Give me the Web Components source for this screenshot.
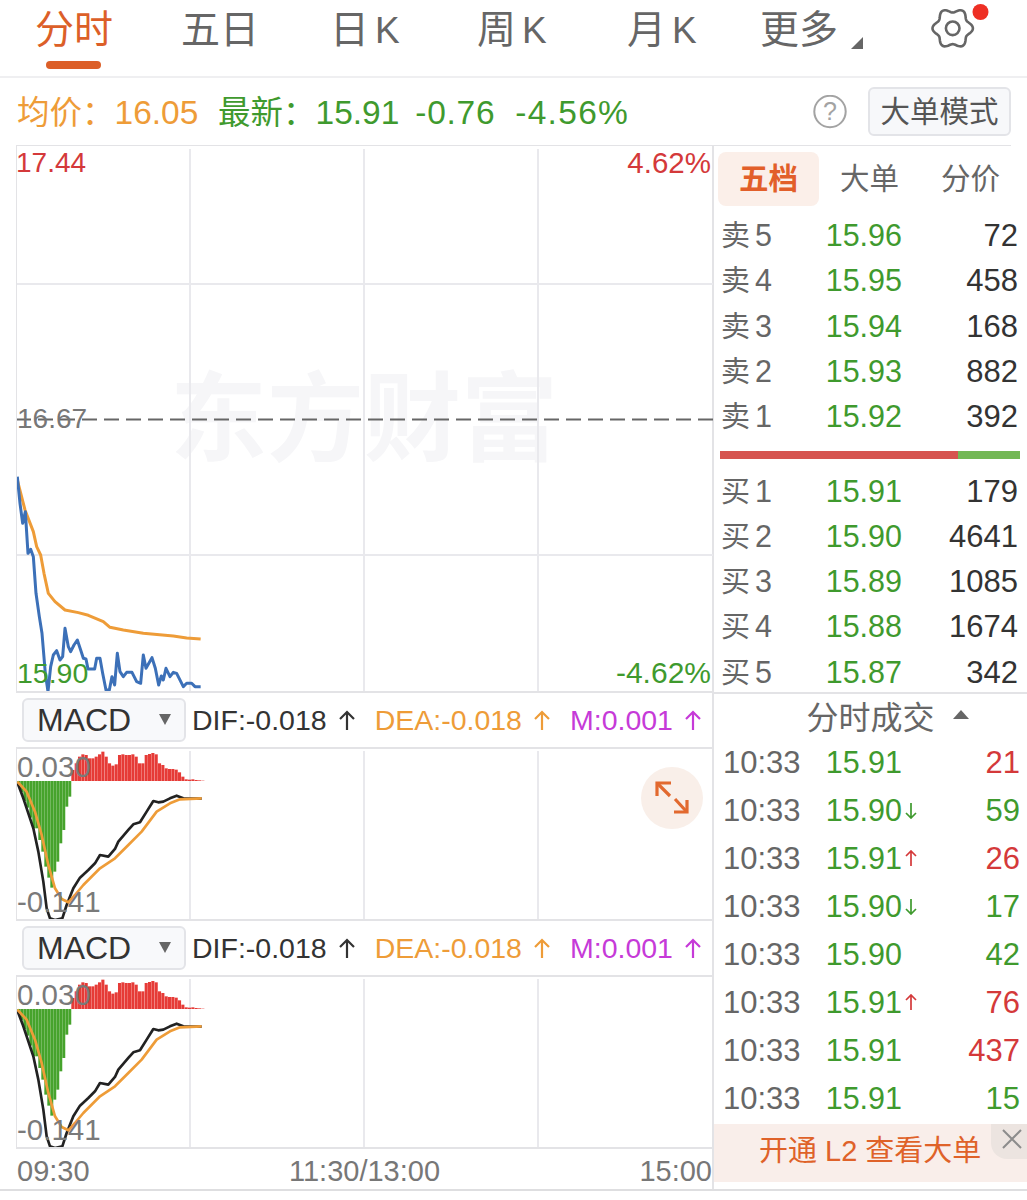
<!DOCTYPE html>
<html lang="zh">
<head>
<meta charset="utf-8">
<title>分时</title>
<style>
	html, body { margin: 0; background: #ffffff; }
	body { font-family: "Liberation Sans", "Noto Sans CJK SC", sans-serif; }
</style>
</head>
<body>
<quote-app></quote-app>
<script>
const GREEN = '#3f9a2e', RED = '#d4393a', ORANGE = '#ee9c38', BRAND = '#dc5f28';

// wavy six-bump outline for the settings icon
function gearPath(cx, cy) {
	const pts = [];
	for (let i = 0; i < 120; i++) {
		const a = i / 120 * Math.PI * 2;
		const r = 18 + 2.2 * Math.cos(6 * a);
		pts.push((cx + r * Math.cos(a)).toFixed(2) + ' ' + (cy + r * Math.sin(a)).toFixed(2));
	}
	return 'M' + pts.join(' L') + ' Z';
}

function arrowUp(size) {
	return `<svg class="arr" width="${size}" height="${size + 3}" viewBox="0 0 18 21" style="display:inline-block;vertical-align:-2px"><path d="M9 20 V2 M2 9 L9 2 L16 9" fill="none" stroke="currentColor" stroke-width="2.200"/></svg>`;
}

class QuoteTabs extends HTMLElement {
	connectedCallback() {
		this.attachShadow({ mode: 'open' }).innerHTML = `<style>
			:host { display: flex; height: 76px; border-bottom: 2px solid #efeff1; font-size: 39px; color: #666666; position: relative; box-sizing: content-box; }
			.tab { width: 78px; flex: none; line-height: 60px; position: relative; white-space: nowrap; }
			.tab.on { color: ${BRAND}; }
			.tab.on::after { content: ''; position: absolute; left: 11px; top: 61px; width: 55px; height: 8px; border-radius: 4px; background: ${BRAND}; }
			.k { font-size: 37px; margin-left: 6px; }
			.more::after { content: ''; position: absolute; right: -25px; top: 37px; border-style: solid; border-width: 0 0 12px 12px; border-color: transparent transparent #666666 transparent; }
			.gear { position: absolute; left: 925px; top: 0; width: 66px; height: 54px; }
		</style>
		<div class="tab on" style="margin-left:35px">分时</div>
		<div class="tab" style="margin-left:68px">五日</div>
		<div class="tab" style="margin-left:71px">日<span class="k">K</span></div>
		<div class="tab" style="margin-left:69px">周<span class="k">K</span></div>
		<div class="tab" style="margin-left:72px">月<span class="k">K</span></div>
		<div class="tab more" style="margin-left:55px">更多</div>
		<svg class="gear" viewBox="925 0 66 54"><path d="${gearPath(952.7, 28.3)}" fill="none" stroke="#666666" stroke-width="2.600"/><circle cx="952.700" cy="28.300" r="6.800" fill="none" stroke="#666666" stroke-width="2.600"/><circle cx="980.500" cy="12" r="8" fill="#ee2f24"/></svg>`;
	}
}

class QuoteInfo extends HTMLElement {
	connectedCallback() {
		this.attachShadow({ mode: 'open' }).innerHTML = `<style>
			:host { display: flex; align-items: center; height: 67px; padding-left: 17px; font-size: 33.500px; white-space: nowrap; }
			.cjk { font-size: 32.500px; }
			.avg { color: ${ORANGE}; width: 201px; flex: none; margin-bottom: 4px; }
			.last { color: ${GREEN}; display: flex; align-items: baseline; margin-bottom: 4px; }
			.help { margin-left: auto; width: 34px; height: 34px; flex: none; }
			.btn { margin: 0 16px 0 21px; width: 143px; height: 49px; box-sizing: border-box; border: 2px solid #e3e4e8; border-radius: 6px; background: #f7f8fa; color: #555555; font-size: 29.500px; line-height: 46px; text-align: center; flex: none; }
		</style>
		<div class="avg"><span class="cjk">均价：</span>16.05</div>
		<div class="last"><span><span class="cjk">最新：</span>15.91</span><span style="margin-left:16px;letter-spacing:.7px">-0.76</span><span style="margin-left:20px;letter-spacing:1.300px">-4.56%</span></div>
		<svg class="help" viewBox="0 0 34 34"><circle cx="17" cy="16.500" r="15.700" fill="none" stroke="#a3a3a3" stroke-width="2"/><text x="17" y="25" font-size="25" text-anchor="middle" fill="#a3a3a3" font-family="Liberation Sans">?</text></svg>
		<div class="btn">大单模式</div>`;
	}
}

// line data is read off the reference at 3x, scaled down in the svg transform
function points(list) { return list.map(p => p.join(',')).join(' '); }

const BLUE_LINE = [[52,50],[60,130],[68,190],[76,155],[84,280],[92,268],[100,290],[108,400],[118,470],[126,520],[136,640],[144,695],[152,620],[160,585],[170,572],[180,600],[188,590],[195,505],[205,560],[212,575],[222,555],[232,540],[242,570],[250,595],[258,597],[264,627],[284,627],[290,595],[300,595],[308,640],[318,690],[328,690],[336,650],[344,675],[352,580],[360,635],[370,650],[380,637],[396,637],[410,665],[422,670],[430,585],[438,625],[456,593],[466,625],[476,675],[484,648],[490,660],[498,625],[510,650],[520,637],[530,640],[550,680],[560,670],[575,670],[585,680],[602,680]];
const AVG_LINE = [[52,60],[75,150],[100,215],[110,260],[122,285],[132,340],[145,400],[165,425],[195,450],[235,458],[265,466],[310,485],[330,502],[370,510],[430,520],[520,528],[560,534],[602,537]];

class PriceChart extends HTMLElement {
	connectedCallback() {
		this.attachShadow({ mode: 'open' }).innerHTML = `<style>
			:host { display: block; position: relative; height: 548px; margin-left: 16px; box-sizing: border-box; border: solid #e3e3e6; border-width: 1px 0 2px 1px; overflow: hidden; font-size: 28px; }
			svg { position: absolute; left: -1px; top: -1px; }
			.mark { position: absolute; left: 153px; top: 216px; font-size: 97px; font-weight: 700; color: #f6f6f8; white-space: nowrap; line-height: 1.2; }
			.l { position: absolute; line-height: 32px; white-space: nowrap; }
		</style>
		<div class="mark">东方财富</div>
		<svg width="697" height="548">
			<g stroke="#e9e9ed" stroke-width="2">
				<line x1="174" x2="174" y1="4" y2="548"/><line x1="348" x2="348" y1="4" y2="548"/><line x1="522" x2="522" y1="4" y2="548"/>
				<line x1="0" x2="697" y1="139" y2="139"/><line x1="0" x2="697" y1="410" y2="410"/>
			</g>
			<line x1="0" x2="697" y1="274.500" y2="274.500" stroke="#666666" stroke-width="2" stroke-dasharray="15 7"/>
			<g fill="none" stroke-linejoin="round" transform="translate(-16,315) scale(.3333)">
				<polyline stroke-width="9" stroke="#ee9c38" points="${points(AVG_LINE)}"/>
				<polyline stroke-width="9" stroke="#3c70b8" points="${points(BLUE_LINE)}"/>
			</g>
		</svg>
		<div class="l" style="left:-1px;top:1px;color:${RED}">17.44</div>
		<div class="l" style="right:2px;top:1px;color:${RED};font-size:29.500px">4.62%</div>
		<div class="l" style="left:0;top:257px;color:#777777">16.67</div>
		<div class="l" style="left:0;top:511px;color:${GREEN};font-size:28.500px">15.90</div>
		<div class="l" style="right:2px;top:511px;color:${GREEN};font-size:30px">-4.62%</div>`;
	}
}

const RED_BARS = [225,205,185,178,180,190,190,185,178,170,185,205,212,208,180,178,180,180,178,185,205,205,180,177,174,178,205,210,220,222,222,224,232,245,253,254,253,255,256,257];
const GREEN_BARS = [[52,268],[61,292],[70,318],[79,338],[88,368],[97,400],[106,400],[115,435],[124,470],[133,515],[142,548],[151,578],[160,530],[169,500],[178,445],[187,405],[196,335],[205,305]];
const MACD_DIF = [[52,262],[70,310],[100,400],[115,470],[130,560],[140,640],[150,670],[165,675],[187,670],[200,630],[220,580],[240,548],[265,525],[285,505],[300,480],[325,485],[345,462],[355,440],[385,405],[400,388],[420,382],[440,350],[460,318],[475,322],[490,320],[510,310],[530,302],[550,310],[605,311]];
const MACD_DEA = [[52,260],[80,290],[105,350],[125,420],[145,510],[165,580],[185,612],[205,622],[225,600],[250,570],[300,520],[345,490],[385,450],[425,410],[470,350],[510,325],[540,313],[605,310]];

class MacdPanel extends HTMLElement {
	connectedCallback() {
		const reds = RED_BARS.map((top, i) => `<rect x="${214 + i * 10}" y="${top}" width="9.300" height="${258 - top}"/>`).join('');
		const greens = GREEN_BARS.map(([x, b]) => `<rect x="${x}" y="258" width="8.800" height="${b - 258}"/>`).join('');
		this.attachShadow({ mode: 'open' }).innerHTML = `<style>
			:host { display: block; }
			.head { display: flex; align-items: center; height: 54px; padding: 0 0 0 22px; font-size: 28.500px; white-space: nowrap; }
			.sel { box-sizing: border-box; width: 164px; height: 44px; flex: none; border: 2px solid #e3e4e8; border-radius: 6px; background: #f8f9fb; color: #333333; font-size: 32px; line-height: 40px; padding-left: 13px; position: relative; margin-right: 6px; }
			.sel::after { content: ''; position: absolute; right: 13px; top: 14px; border-style: solid; border-width: 11px 6.500px 0; border-color: #666666 transparent transparent; }
			.v { display: flex; align-items: center; gap: 11px; margin-right: 19px; }
			.box { display: block; position: relative; height: 174px; margin-left: 16px; box-sizing: border-box; border: solid #e3e3e6; border-width: 2px 0 2px 1px; overflow: hidden; font-size: 29.500px; color: #7a7a7a; }
			.box svg { position: absolute; left: -1px; top: -2px; }
			.l { position: absolute; left: 0; line-height: 32px; white-space: nowrap; }
		</style>
		<div class="head">
			<div class="sel">MACD</div>
			<span class="v" style="color:#333333">DIF:-0.018 ${arrowUp(18)}</span>
			<span class="v" style="color:${ORANGE}">DEA:-0.018 ${arrowUp(18)}</span>
			<span class="v" style="color:#c63ad8">M:0.001 ${arrowUp(18)}</span>
		</div>
		<div class="box">
			<svg width="697" height="174">
				<line x1="174" x2="174" y1="4" y2="174" stroke="#e9e9ed" stroke-width="2"/>
				<line x1="348" x2="348" y1="4" y2="174" stroke="#e9e9ed" stroke-width="2"/>
				<line x1="522" x2="522" y1="4" y2="174" stroke="#e9e9ed" stroke-width="2"/>
				<g transform="translate(-16,-52) scale(.3333)">
					<g fill="#e63b37">${reds}</g>
					<g fill="#46a32c">${greens}</g>
					<polyline fill="none" stroke="#222222" stroke-width="8" stroke-linejoin="round" points="${points(MACD_DIF)}"/>
					<polyline fill="none" stroke="#ee9c38" stroke-width="8" stroke-linejoin="round" points="${points(MACD_DEA)}"/>
				</g>
			</svg>
			<div class="l" style="top:2px">0.030</div>
			<div class="l" style="top:137px">-0.141</div>
			<slot></slot>
		</div>`;
	}
}

class ExpandButton extends HTMLElement {
	connectedCallback() {
		this.attachShadow({ mode: 'open' }).innerHTML = `<style>
			:host { position: absolute; left: 624px; top: 18px; width: 62px; height: 62px; border-radius: 50%; background: #f9efe9; }
			svg { display: block; }
		</style>
		<svg width="62" height="62" viewBox="-31 -31 62 62"><g fill="none" stroke="#e2692f" stroke-width="3.200"><path d="M-1 -15 H-15 V-2"/><path d="M-14 -14 L-2 -2"/><path d="M2 14 H15 V2"/><path d="M3 1 L14 13"/></g></svg>`;
	}
}

class DepthRow extends HTMLElement {
	connectedCallback() {
		const { label, n, price, vol } = this.dataset;
		this.attachShadow({ mode: 'open' }).innerHTML = `<style>
			:host { display: grid; grid-template-columns: 100px 81px 1fr; align-items: baseline; height: 45.300px; line-height: 45.300px; padding: 0 9px 0 7px; font-size: 30.500px; white-space: nowrap; }
			.a { color: #666666; font-size: 29px; }
			.a span { font-size: 30.500px; margin-left: 5px; }
			.p { color: ${GREEN}; text-align: right; }
			.v { color: #333333; text-align: right; font-size: 31px; }
		</style>
		<div class="a">${label}<span>${n}</span></div><div class="p">${price}</div><div class="v">${vol}</div>`;
	}
}

class DepthBook extends HTMLElement {
	connectedCallback() {
		const rows = (label, list) => list.map(([n, price, vol]) => `<depth-row data-label="${label}" data-n="${n}" data-price="${price}" data-vol="${vol}"></depth-row>`).join('');
		this.attachShadow({ mode: 'open' }).innerHTML = `<style>
			:host { display: block; height: 549px; box-sizing: border-box; border-bottom: 2px solid #e3e3e6; }
			.tabs { display: flex; height: 68px; padding: 7px 0 0 4px; box-sizing: border-box; font-size: 29.500px; color: #666666; position: relative; }
			.tabs::before { content: ''; position: absolute; left: 0; right: 16px; top: 0; height: 1px; background: #e3e3e6; }
			.tabs div { width: 101px; height: 54px; line-height: 54px; text-align: center; }
			.tabs .on { color: #e25f2a; font-weight: 700; background: #fbefe9; border-radius: 8px; }
			.bar { display: flex; height: 8px; margin: 11px 7px 10px 6px; }
			.bar i { display: block; }
			.sell { height: 226.500px; }
		</style>
		<div class="tabs"><div class="on">五档</div><div>大单</div><div>分价</div></div>
		<div class="sell">${rows('卖', [[5,'15.96',72],[4,'15.95',458],[3,'15.94',168],[2,'15.93',882],[1,'15.92',392]])}</div>
		<div class="bar"><i style="width:238px;background:#d6544f"></i><i style="flex:1;background:#73b855"></i></div>
		${rows('买', [[1,'15.91',179],[2,'15.90',4641],[3,'15.89',1085],[4,'15.88',1674],[5,'15.87',342]])}`;
	}
}

class TradeRow extends HTMLElement {
	connectedCallback() {
		const { price, dir, vol, side } = this.dataset;
		const volColor = side === 'up' ? RED : GREEN;
		const tick = `<svg width="14" height="17" viewBox="0 0 14 17"><path d="M7 16 V1 M2 6 L7 1 L12 6" fill="none" stroke="currentColor" stroke-width="1.700"/></svg>`;
		const arrow = dir === 'up' ? `<span style="color:${RED}">${tick}</span>` : dir === 'down' ? `<span style="color:${GREEN};transform:scaleY(-1)">${tick}</span>` : '';
		this.attachShadow({ mode: 'open' }).innerHTML = `<style>
			:host { display: grid; grid-template-columns: 102px 77px 20px 1fr; align-items: baseline; height: 48px; line-height: 48px; padding: 0 7px 0 9px; font-size: 30.500px; white-space: nowrap; }
			.t { color: #666666; font-size: 31px; }
			.p { color: ${GREEN}; text-align: right; }
			.d { align-self: center; display: flex; align-items: center; padding-left: 2px; }
			.d span { display: block; height: 17px; }
			.d svg { display: block; }
			.v { text-align: right; color: ${volColor}; font-size: 31px; }
		</style>
		<div class="t">10:33</div><div class="p">${price}</div><div class="d">${arrow}</div><div class="v">${vol}</div>`;
	}
}

class TradeList extends HTMLElement {
	connectedCallback() {
		const data = [['15.91','', 21,'up'],['15.90','down',59,'down'],['15.91','up',26,'up'],['15.90','down',17,'down'],['15.90','',42,'down'],['15.91','up',76,'up'],['15.91','',437,'up'],['15.91','',15,'down']];
		this.attachShadow({ mode: 'open' }).innerHTML = `<style>
			:host { display: block; }
			.title { height: 44px; line-height: 48px; text-align: center; font-size: 32px; color: #666666; }
			.title span { position: relative; }
			.title span::after { content: ''; position: absolute; right: -34px; top: 10px; border-style: solid; border-width: 0 8px 9px; border-color: transparent transparent #666666; }
		</style>
		<div class="title"><span>分时成交</span></div>
		${data.map(([price, dir, vol, side]) => `<trade-row data-price="${price}" data-dir="${dir}" data-vol="${vol}" data-side="${side}"></trade-row>`).join('')}`;
	}
}

class L2Banner extends HTMLElement {
	connectedCallback() {
		this.attachShadow({ mode: 'open' }).innerHTML = `<style>
			:host { display: block; position: relative; height: 58px; margin-top: 2px; background: #f9eeea; color: #df6229; font-size: 29px; line-height: 54px; padding-left: 45px; white-space: nowrap; }
			.x { position: absolute; right: 0; top: 0; width: 36px; height: 35px; background: #ece4e0; border-bottom-left-radius: 16px; }
			svg { display: block; margin: 3px 0 0 9px; }
		</style>
		开通 L2 查看大单
		<div class="x"><svg width="24" height="24" viewBox="0 0 24 24"><path d="M3 3 L21 21 M21 3 L3 21" stroke="#8c8c8c" stroke-width="2" fill="none"/></svg></div>`;
	}
}

class QuoteApp extends HTMLElement {
	connectedCallback() {
		this.attachShadow({ mode: 'open' }).innerHTML = `<style>
			:host { display: block; width: 1027px; height: 1200px; overflow: hidden; background: #ffffff; }
			.main { display: grid; grid-template-columns: 713px 314px; height: 1044px; border-bottom: 2px solid #dedee0; box-sizing: content-box; }
			.right { border-left: 2px solid #e3e3e6; margin-left: -1px; }
			.axis { display: flex; justify-content: space-between; align-items: center; height: 40px; box-sizing: border-box; padding: 5px 1px 0 17px; font-size: 29px; color: #777777; }
		</style>
		<quote-tabs></quote-tabs>
		<quote-info></quote-info>
		<div class="main">
			<div>
				<price-chart></price-chart>
				<macd-panel><expand-button></expand-button></macd-panel>
				<macd-panel></macd-panel>
				<div class="axis"><span>09:30</span><span>11:30/13:00</span><span>15:00</span></div>
			</div>
			<div class="right">
				<depth-book></depth-book>
				<trade-list></trade-list>
				<l2-banner></l2-banner>
			</div>
		</div>`;
	}
}

customElements.define('quote-tabs', QuoteTabs);
customElements.define('quote-info', QuoteInfo);
customElements.define('price-chart', PriceChart);
customElements.define('macd-panel', MacdPanel);
customElements.define('expand-button', ExpandButton);
customElements.define('depth-row', DepthRow);
customElements.define('depth-book', DepthBook);
customElements.define('trade-row', TradeRow);
customElements.define('trade-list', TradeList);
customElements.define('l2-banner', L2Banner);
customElements.define('quote-app', QuoteApp);
</script>
</body>
</html>
